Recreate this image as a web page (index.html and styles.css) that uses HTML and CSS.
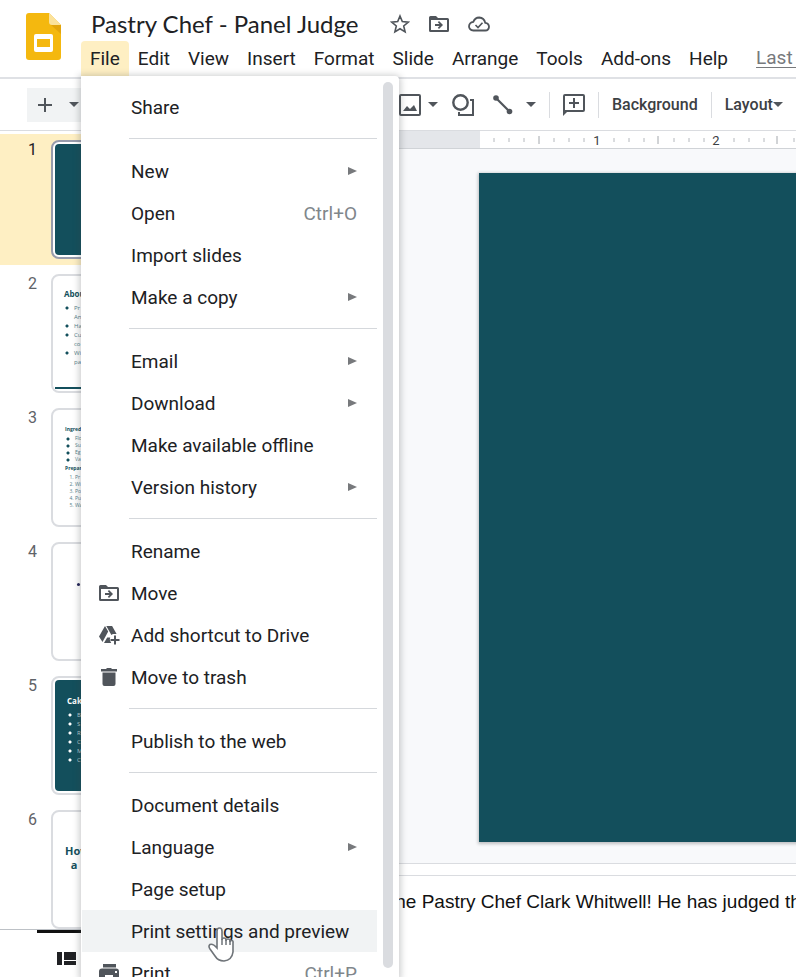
FILE: index.html
```html
<!DOCTYPE html>
<html lang="en">
<head>
    <meta charset="UTF-8">
    <meta name="viewport" content="width=device-width, initial-scale=1.0">
    <title>Pastry Chef - Panel Judge</title>
    <link rel="stylesheet" href="styles.css">
</head>
<body>
    <!-- Shared icons -->
    <svg class="defs" width="0" height="0">
        <symbol id="folder" viewBox="0 0 20 16">
            <path d="M0 1.500Q0 0 1.500 0H7l2 2h9.500Q20 2 20 3.500v11q0 1.500-1.500 1.500h-17Q0 16 0 14.500zM2 4v10h16V4z" fill-rule="evenodd"/>
            <path d="M6 8h4.500L8.800 6.300 10 5l4 4-4 4-1.200-1.300L10.500 10H6z"/>
        </symbol>
        <symbol id="caret" viewBox="0 0 10 5">
            <path d="M0 0h10L5 5z"/>
        </symbol>
        <symbol id="arrow" viewBox="0 0 9 8">
            <path d="M0 0l9 4-9 4z"/>
        </symbol>
    </svg>

    <header>
        <a href="#" class="logo" aria-label="Slides home">
            <svg width="35" height="47" viewBox="0 0 35 47">
                <path d="M3 0h20l12 12v32q0 3-3 3H3q-3 0-3-3V3q0-3 3-3z" fill="#f4b80f"/>
                <path d="M23 0l12 12H26q-3 0-3-3z" fill="#fbe29b"/>
                <path d="M25 12h10v9z" fill="#e3a50c"/>
                <rect x="8" y="21" width="19" height="18" rx="2" fill="#fff"/>
                <rect x="11" y="26" width="13" height="8" fill="#f4b80f"/>
            </svg>
        </a>
        <div class="heading">
            <div class="title-row">
                <h1>Pastry Chef - Panel Judge</h1>
                <button aria-label="Star">
                    <svg width="20" height="20" viewBox="0 0 20 20"><path d="M10 2l2.300 5.600 6 .5-4.600 3.900 1.400 5.900L10 14.800l-5.100 3.100 1.400-5.900L1.700 8.100l6-.5z" fill="none" stroke="#50555b" stroke-width="1.600"/></svg>
                </button>
                <button aria-label="Move">
                    <svg width="20" height="16"><use href="#folder"/></svg>
                </button>
                <button aria-label="Saved to Drive">
                    <svg width="22" height="16" viewBox="0 0 22 16"><path d="M5.500 14.500Q1 14 1 10.200 1.300 6.500 5.300 5.900 7 1.500 11.200 1.500q5 .3 6 5.300 3.800.5 3.800 4-.3 3.500-3.700 3.700z" fill="none" stroke="#50555b" stroke-width="1.800"/><path d="M7.500 9l2.500 2.500 4.500-4.700" fill="none" stroke="#50555b" stroke-width="1.600"/></svg>
                </button>
            </div>
            <nav>
                <button class="active">File</button>
                <button>Edit</button>
                <button>View</button>
                <button>Insert</button>
                <button>Format</button>
                <button>Slide</button>
                <button>Arrange</button>
                <button>Tools</button>
                <button>Add-ons</button>
                <button>Help</button>
                <a href="#">Last edit</a>
            </nav>
        </div>
    </header>

    <div class="toolbar">
        <div class="new-slide">
            <button aria-label="New slide"><svg width="14" height="14" viewBox="0 0 14 14"><path d="M6 0h2v6h6v2H8v6H6V8H0V6h6z"/></svg></button>
            <button aria-label="New slide with layout"><svg width="10" height="5"><use href="#caret"/></svg></button>
        </div>
        <div class="tools">
            <button aria-label="Insert image"><svg width="22" height="22" viewBox="0 0 22 22"><path d="M2 0h18q2 0 2 2v18q0 2-2 2H2q-2 0-2-2V2q0-2 2-2zm0 2v18h18V2z" fill-rule="evenodd"/><path d="M4 17l4-5 3 3 4-4 3 6z"/></svg></button>
            <button aria-label="Image options" class="caret"><svg width="10" height="5"><use href="#caret"/></svg></button>
            <button aria-label="Shape"><svg width="22" height="22" viewBox="0 0 22 22"><circle cx="8.500" cy="8.500" r="7.200" fill="none" stroke="#50555b" stroke-width="2.400"/><path d="M18 5h4v17H6v-4h2v2h12V7h-2z"/></svg></button>
            <button aria-label="Line" class="line"><svg width="20" height="20" viewBox="0 0 20 20"><path d="M3 3l14 14" stroke="#50555b" stroke-width="2.200"/><circle cx="3" cy="3" r="2.800"/><circle cx="16.500" cy="16.500" r="2.800"/></svg></button>
            <button aria-label="Line options"><svg width="10" height="5"><use href="#caret"/></svg></button>
            <span class="sep"></span>
            <button aria-label="Add comment"><svg width="22" height="22" viewBox="0 0 22 22"><path d="M2 0h18q2 0 2 2v14q0 2-2 2H4l-4 4V2q0-2 2-2zm0 2v14h18V2z" fill-rule="evenodd"/><path d="M10 4h2v4h4v2h-4v4h-2v-4H6V8h4z"/></svg></button>
            <span class="sep"></span>
            <button>Background</button>
            <span class="sep"></span>
            <button>Layout<svg width="10" height="5"><use href="#caret"/></svg></button>
        </div>
    </div>

    <main>
        <aside>
            <ol class="filmstrip">
                <li class="selected">
                    <span class="num">1</span>
                    <div class="thumb dark"><div class="slide"></div></div>
                </li>
                <li>
                    <span class="num">2</span>
                    <div class="thumb">
                        <div class="slide about">
                            <h2>About</h2>
                            <ul>
                                <li>Pr<br>An</li>
                                <li>Ha</li>
                                <li>Cu<br>co</li>
                                <li>Wi<br>pa</li>
                            </ul>
                        </div>
                    </div>
                </li>
                <li>
                    <span class="num">3</span>
                    <div class="thumb">
                        <div class="slide recipe">
                            <h2>Ingredi</h2>
                            <ul><li>Flo</li><li>Su</li><li>Eg</li><li>Va</li></ul>
                            <h2>Prepar</h2>
                            <ol><li>Pr</li><li>Wi</li><li>Po</li><li>Pu</li><li>Wa</li></ol>
                        </div>
                    </div>
                </li>
                <li>
                    <span class="num">4</span>
                    <div class="thumb"><div class="slide point"><i></i></div></div>
                </li>
                <li>
                    <span class="num">5</span>
                    <div class="thumb dark">
                        <div class="slide cakes">
                            <h2>Cake</h2>
                            <ul><li>B</li><li>S</li><li>R</li><li>C</li><li>M</li><li>C</li></ul>
                        </div>
                    </div>
                </li>
                <li>
                    <span class="num">6</span>
                    <div class="thumb"><div class="slide how"><h2>How<br>&nbsp; a</h2></div></div>
                </li>
            </ol>
            <div class="views">
                <button aria-label="Filmstrip view"><svg width="19" height="13" viewBox="0 0 19 13"><path d="M0 0h5v13H0zM7 0h12v8H7zM7 9h12v4H7z"/></svg></button>
            </div>
        </aside>

        <section class="editor">
            <div class="ruler">
                <svg width="600" height="18">
                    <path d="M14 7v4m15-4v4m15-4v4m30-4v4m15-4v4m15-4v4m30-4v4m15-4v4m15-4v4m30-4v4m15-4v4m15-4v4m30-4v4m15-4v4m15-4v4m30-4v4" stroke="#b4b8bd"/>
                    <path d="M59 5v8m119-8v8m119-8v8" stroke="#a4a8ad"/>
                    <text x="117" y="14">1</text>
                    <text x="236" y="14">2</text>
                </svg>
            </div>
            <div class="canvas">
                <div class="page"></div>
            </div>
            <div class="divider"></div>
            <div class="notes">the Pastry Chef Clark Whitwell! He has judged the</div>
        </section>
    </main>

    <!-- File menu -->
    <div class="menu">
        <div class="menu-list">
            <button>Share</button>
            <hr>
            <button>New <svg class="arrow"><use href="#arrow"/></svg></button>
            <button>Open <kbd>Ctrl+O</kbd></button>
            <button>Import slides</button>
            <button>Make a copy <svg class="arrow"><use href="#arrow"/></svg></button>
            <hr>
            <button>Email <svg class="arrow"><use href="#arrow"/></svg></button>
            <button>Download <svg class="arrow"><use href="#arrow"/></svg></button>
            <button>Make available offline</button>
            <button>Version history <svg class="arrow"><use href="#arrow"/></svg></button>
            <hr>
            <button>Rename</button>
            <button class="with-icon"><svg class="icon" viewBox="-1 -3 22 22"><use href="#folder" width="20" height="16"/></svg>Move</button>
            <button class="with-icon"><svg class="icon" viewBox="0 0 22 22"><path d="M7 2l3.200 5.500L4.500 18 1 12.500zM8.300 2h5.800l4.500 8h-3.200q-1 0-2 1zM9.200 13.500h3q-.8 2 0 3.500l1 2H6z"/><path d="M16 11.500h2V15h3.500v2H18v3.500h-2V17h-3.500v-2H16z"/></svg>Add shortcut to Drive</button>
            <button class="with-icon"><svg class="icon" viewBox="0 0 22 22"><path d="M3 3h5l1-1h4l1 1h5v2.500H3zM4.500 6.500h13V18q0 2-2 2h-9q-2 0-2-2z"/></svg>Move to trash</button>
            <hr>
            <button>Publish to the web</button>
            <hr>
            <button>Document details</button>
            <button>Language <svg class="arrow"><use href="#arrow"/></svg></button>
            <button>Page setup</button>
            <button class="hover">Print settings and preview</button>
            <button class="with-icon"><svg class="icon" viewBox="0 0 22 22"><path d="M5 2h13v3.500H5zM4 6.500h14q3 0 3 3V16h-4v4H5v-4H1V9.500q0-3 3-3zM7 13v5h8v-5zM17 9v2h2V9z" fill-rule="evenodd"/></svg>Print <kbd>Ctrl+P</kbd></button>
        </div>
        <div class="scrollbar"></div>
        <svg class="cursor" width="28" height="36" viewBox="0 0 28 36">
            <path d="M10 22V5q0-3 2.500-3T15 5v9q0-2 2-2t2 2v1q0-2 2-2t2 2v1q0-1.500 1.700-1.500T26 17v9q-1 8-9 9-6 0-9-5l-5-7q-2-3 0-4.500 3-1 7 3.500z" fill="#fff" stroke="#6f7479" stroke-width="1.600"/>
            <path d="M15 13v6m4-5v5m4-4v4" stroke="#6f7479" stroke-width="1.500"/>
        </svg>
    </div>
</body>
</html>
```
FILE: styles.css
```css
* {
    box-sizing: border-box;
}

body {
    margin: 0;
    height: 100vh;
    display: flex;
    flex-direction: column;
    overflow: hidden;
    position: relative;
    background-color: #fff;
    color: #202124;
    font-family: Roboto, sans-serif;
    font-size: 18px;
}

button {
    padding: 0;
    border: none;
    background: none;
    color: inherit;
    font: inherit;
    white-space: nowrap;
    cursor: pointer;
}

svg {
    display: block;
    flex-shrink: 0;
    fill: #50555b;
}

h1, h2, ul, ol {
    margin: 0;
    padding: 0;
}

ol, ul {
    list-style: none;
}

.defs {
    position: absolute;
}

/* Header */
header {
    display: flex;
    flex-shrink: 0;
    height: 79px;
    overflow: hidden;
    border-bottom: 2px solid #dfe1e5;
}

.logo {
    width: 81px;
    padding: 13px 0 0 26px;
    flex-shrink: 0;
}

.heading {
    flex: 1;
    min-width: 0;
}

.title-row {
    display: flex;
    align-items: center;
    height: 41px;
    padding: 6px 0 0 10px;
    gap: 19px;
}

h1 {
    margin-right: 13px;
    font-family: Lato, sans-serif;
    font-size: 24px;
    font-weight: 400;
    line-height: 26px;
    white-space: nowrap;
}

nav {
    display: flex;
    height: 36px;
}

nav button, nav a {
    flex-shrink: 0;
    padding: 0 9px;
    line-height: 34px;
    font-size: 19px;
    white-space: nowrap;
}

nav .active {
    background-color: #feefc3;
    border-radius: 4px 4px 0 0;
}

nav a {
    margin-left: 10px;
    color: #77797c;
    text-underline-offset: 3px;
}

/* Toolbar */
.toolbar {
    display: flex;
    align-items: center;
    flex-shrink: 0;
    height: 52px;
    padding-left: 27px;
    border-bottom: 1px solid #dadce0;
}

.new-slide {
    display: flex;
    align-items: center;
    gap: 17px;
    width: 62px;
    height: 34px;
    padding-left: 11px;
    background-color: #f1f3f4;
}

.tools {
    display: flex;
    align-items: center;
    margin-left: 310px;
    gap: 13px;
    font-size: 16px;
    font-weight: 500;
    color: #3c4043;
}

.tools button {
    display: flex;
    align-items: center;
}

.tools .caret {
    margin: 0 1px 0 -6px;
}

.tools .line {
    margin-left: 6px;
}

.sep {
    width: 1px;
    height: 26px;
    background-color: #dadce0;
}

/* Slide list */
main {
    display: flex;
    flex: 1;
    min-height: 0;
}

aside {
    display: flex;
    flex-direction: column;
    width: 280px;
    flex-shrink: 0;
}

.filmstrip {
    flex: 1;
    min-height: 0;
    padding-top: 3px;
    overflow: hidden;
    border-bottom: 1px solid #bdc1c6;
}

.filmstrip > li {
    display: flex;
    height: 131px;
    margin-bottom: 3px;
    padding-top: 6px;
}

.filmstrip .selected {
    background-color: #feefc3;
}

.num {
    width: 51px;
    padding-left: 28px;
    font-size: 16px;
    color: #5f6368;
}

.selected .num {
    color: #202124;
}

.thumb {
    width: 210px;
    height: 119px;
    padding: 2px;
    overflow: hidden;
    background-color: #fff;
    border: 2px solid #dadce0;
    border-radius: 8px;
}

.selected .thumb {
    border-color: #989cac;
}

.slide {
    height: 100%;
    font-family: "Open Sans", sans-serif;
    font-size: 6px;
    line-height: 9px;
    color: #55808a;
}

.slide h2 {
    color: #134f5c;
    font-size: 8px;
    font-weight: 700;
}

.dark .slide {
    background-color: #134f5c;
    border-radius: 4px;
}

/* bullets are drawn as round dots left of the text */
.slide ul li {
    padding-left: 10px;
    background: radial-gradient(circle at 3px 4px, #134f5c 1px, transparent 2px);
}

.about {
    padding: 11px 0 0 9px;
    border-bottom: 2px solid #134f5c;
}

.about h2 {
    margin-bottom: 6px;
}

.recipe {
    padding: 12px 0 0 10px;
    font-size: 5px;
    line-height: 7px;
}

.recipe h2 {
    margin: 2px 0;
    font-size: 5px;
}

.recipe ol {
    list-style: decimal;
    padding-left: 10px;
}

.point {
    padding: 37px 0 0 22px;
}

.point i {
    display: block;
    width: 3px;
    height: 3px;
    border-radius: 2px;
    background-color: #202156;
}

.slide.cakes {
    padding: 16px 0 0 12px;
    color: #b8cdd1;
}

.cakes h2 {
    margin-bottom: 6px;
    color: #fff;
}

.slide.cakes ul li {
    background: radial-gradient(circle at 3px 4px, #fff 1px, transparent 2px);
}

.how {
    padding: 30px 0 0 10px;
}

.how h2 {
    font-size: 11px;
    line-height: 14px;
}

.views {
    height: 47px;
    padding: 15px 0 0 20px;
    margin-left: 37px;
    border-top: 3px solid #111;
}

.views svg {
    fill: #202124;
}

/* Editor */
.editor {
    display: flex;
    flex-direction: column;
    flex: 1;
    min-width: 0;
}

.ruler {
    height: 18px;
    flex-shrink: 0;
    padding-left: 200px;
    overflow: hidden;
    background-color: #e4e6ea;
    border-bottom: 1px solid #d0d3d7;
}

.ruler svg {
    background-color: #fff;
}

.ruler text {
    font-size: 13px;
    fill: #3c4043;
    text-anchor: middle;
}

.canvas {
    flex: 1;
    min-height: 0;
    padding: 24px 0 21px 199px;
    overflow: hidden;
    background-color: #f8f9fb;
}

.page {
    height: 100%;
    aspect-ratio: 16 / 9;
    background-color: #134f5c;
    box-shadow: 0 1px 3px 1px rgba(60, 64, 67, 0.3);
}

.divider {
    height: 13px;
    flex-shrink: 0;
    border-top: 1px solid #dadce0;
    border-bottom: 1px solid #dadce0;
}

.notes {
    height: 101px;
    flex-shrink: 0;
    padding: 15px 0 0 110px;
    overflow: hidden;
    font-family: "Liberation Sans", Arial, sans-serif;
    font-size: 19px;
    line-height: 22px;
    white-space: nowrap;
    color: #111;
}

/* File menu */
.menu {
    position: absolute;
    top: 76px;
    left: 81px;
    bottom: 0;
    display: flex;
    width: 318px;
    background-color: #fff;
    border-radius: 0 4px 0 0;
    box-shadow: 0 1px 6px 2px rgba(60, 64, 67, 0.25);
}

.menu-list {
    flex: 1;
    padding: 10px 0 0 1px;
    overflow: hidden;
}

.menu-list button {
    display: flex;
    align-items: center;
    width: 100%;
    height: 42px;
    padding: 0 20px 0 49px;
    font-size: 19px;
}

.menu-list .with-icon {
    padding-left: 16px;
}

.menu-list .hover {
    background-color: #f1f3f4;
}

.menu-list hr {
    height: 1px;
    margin: 10px 0 11px 47px;
    border: none;
    background-color: #d5d8dc;
}

.icon {
    width: 22px;
    height: 22px;
    margin-right: 11px;
}

.arrow {
    width: 9px;
    height: 8px;
    margin-left: auto;
    fill: #77797c;
}

kbd {
    margin-left: auto;
    font-family: inherit;
    color: #80868b;
}

.scrollbar {
    width: 10px;
    margin: 6px 6px 9px;
    background-color: #dadce0;
    border-radius: 5px;
}

.cursor {
    position: absolute;
    left: 126px;
    bottom: 15px;
}
```
